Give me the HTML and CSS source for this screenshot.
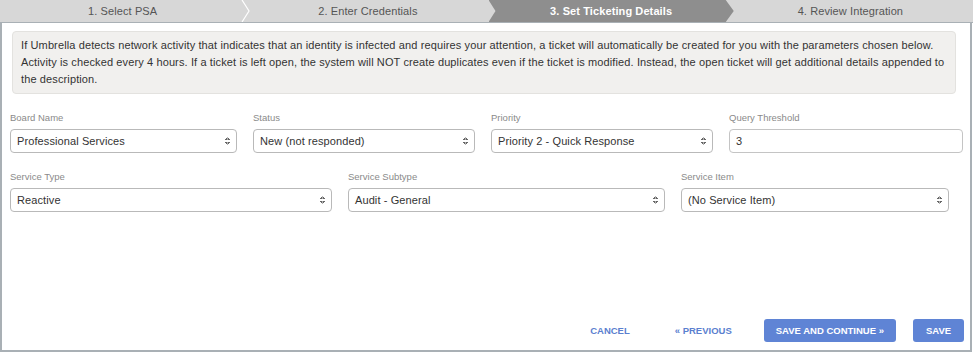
FILE: index.html
```html
<!DOCTYPE html>
<html lang="en">
<head>
    <meta charset="UTF-8">
    <title>Umbrella - PSA Integration</title>
    <link rel="stylesheet" href="styles.css">
</head>
<body>
    <div class="wizard">
        <div class="steps">
            <div class="step">
                1. Select PSA
                <svg class="sep" width="9" height="22" viewBox="0 0 9 22"><polyline points="1,0 8,11 1,22" fill="none" stroke="#fff" stroke-width="1.2"/></svg>
            </div>
            <div class="step">2. Enter Credentials</div>
            <div class="step active">3. Set Ticketing Details</div>
            <div class="step">4. Review Integration</div>
        </div>

        <div class="panel">
            <div class="info">
                If Umbrella detects network activity that indicates that an identity is infected and requires your attention, a ticket will automatically be created for you with the parameters chosen below. Activity is checked every 4 hours. If a ticket is left open, the system will NOT create duplicates even if the ticket is modified. Instead, the open ticket will get additional details appended to the description.
            </div>

            <div class="row row-one">
                <div class="field">
                    <label>Board Name</label>
                    <div class="select">Professional Services</div>
                </div>
                <div class="field">
                    <label>Status</label>
                    <div class="select">New (not responded)</div>
                </div>
                <div class="field">
                    <label>Priority</label>
                    <div class="select">Priority 2 - Quick Response</div>
                </div>
                <div class="field">
                    <label>Query Threshold</label>
                    <div class="input">3</div>
                </div>
            </div>

            <div class="row row-two">
                <div class="field">
                    <label>Service Type</label>
                    <div class="select">Reactive</div>
                </div>
                <div class="field">
                    <label>Service Subtype</label>
                    <div class="select">Audit - General</div>
                </div>
                <div class="field">
                    <label>Service Item</label>
                    <div class="select">(No Service Item)</div>
                </div>
            </div>

            <div class="actions">
                <button class="btn-link btn-cancel">Cancel</button>
                <button class="btn-link btn-prev">&laquo; Previous</button>
                <button class="btn">Save and Continue &raquo;</button>
                <button class="btn btn-save">Save</button>
            </div>
        </div>
    </div>
</body>
</html>
```

FILE: styles.css
```css
* {
    margin: 0;
    padding: 0;
    box-sizing: border-box;
    font-family: 'Liberation Sans', Arial, sans-serif;
}

body {
    background-color: white;
    width: 973px;
    height: 352px;
}

.wizard {
    height: 352px;
    display: flex;
    flex-direction: column;
}

/* step bar */
.steps {
    display: flex;
    height: 23px;
    background-color: #d7d7d7;
    border-bottom: 1px solid #a9b0b5;
}

.step {
    position: relative;
    flex: 1;
    display: flex;
    align-items: center;
    justify-content: center;
    font-size: 11px;
    letter-spacing: 0.1px;
    color: #555;
}

.step .sep {
    position: absolute;
    right: -5px;
    top: 0;
}

.step.active {
    background-color: #8e8e8e;
    color: white;
    font-weight: bold;
    margin-left: -2px;
    margin-right: -6px;
    z-index: 1;
    clip-path: polygon(0 0, calc(100% - 8px) 0, 100% 50%, calc(100% - 8px) 100%, 0 100%, 7px 50%);
}

/* panel */
.panel {
    flex: 1;
    display: flex;
    flex-direction: column;
    border: 2px solid #a9b0b5;
    border-top: none;
    margin-right: 1px;
    padding: 8px 6px 8px 8px;
}

.info {
    margin: 0 8px 0 2px;
    padding: 5px 8px 5px 8px;
    background-color: #f1f0ee;
    border: 1px solid #e3e2df;
    border-radius: 4px;
    font-size: 11px;
    letter-spacing: 0.12px;
    line-height: 17px;
    color: #333;
}

.row {
    display: grid;
    column-gap: 16px;
}

.row-one {
    margin-top: 18px;
    grid-template-columns: 227px 222px 222px 234px;
}

.row-two {
    margin-top: 18px;
    grid-template-columns: 322px 317px 268px;
}

.field label {
    display: block;
    font-size: 9.5px;
    color: #8a8a8a;
    height: 12px;
    margin-bottom: 5px;
}

.select,
.input {
    position: relative;
    height: 24px;
    border: 1px solid #b9b9b9;
    border-radius: 4px;
    padding: 0 6px;
    font-size: 11px;
    letter-spacing: 0.1px;
    line-height: 22px;
    color: #333;
    background-color: white;
}

.select::after {
    content: '';
    position: absolute;
    right: 6px;
    top: 7px;
    width: 5px;
    height: 8px;
    background:
        linear-gradient(to bottom right, transparent 50%, #666 50%) left top / 50% 3px no-repeat,
        linear-gradient(to bottom left, transparent 50%, #666 50%) right top / 50% 3px no-repeat,
        linear-gradient(to top right, transparent 50%, #666 50%) left bottom / 50% 3px no-repeat,
        linear-gradient(to top left, transparent 50%, #666 50%) right bottom / 50% 3px no-repeat;
}

.input {
    border-color: #c4c4c4;
}

/* footer buttons */
.actions {
    margin-top: auto;
    display: flex;
    justify-content: flex-end;
    align-items: center;
}

.btn-link,
.btn {
    height: 23px;
    border: none;
    border-radius: 3px;
    font-size: 9.5px;
    font-weight: bold;
    text-transform: uppercase;
    cursor: pointer;
}

.btn-link {
    background: none;
    color: #5b7fcf;
    padding: 0;
}

.btn-cancel {
    margin-right: 45px;
}

.btn-prev {
    margin-right: 32px;
}

.btn {
    background-color: #5f84d5;
    color: white;
    padding: 0 12px;
}

.btn-save {
    width: 51px;
    padding: 0;
    margin-left: 17px;
}
```
